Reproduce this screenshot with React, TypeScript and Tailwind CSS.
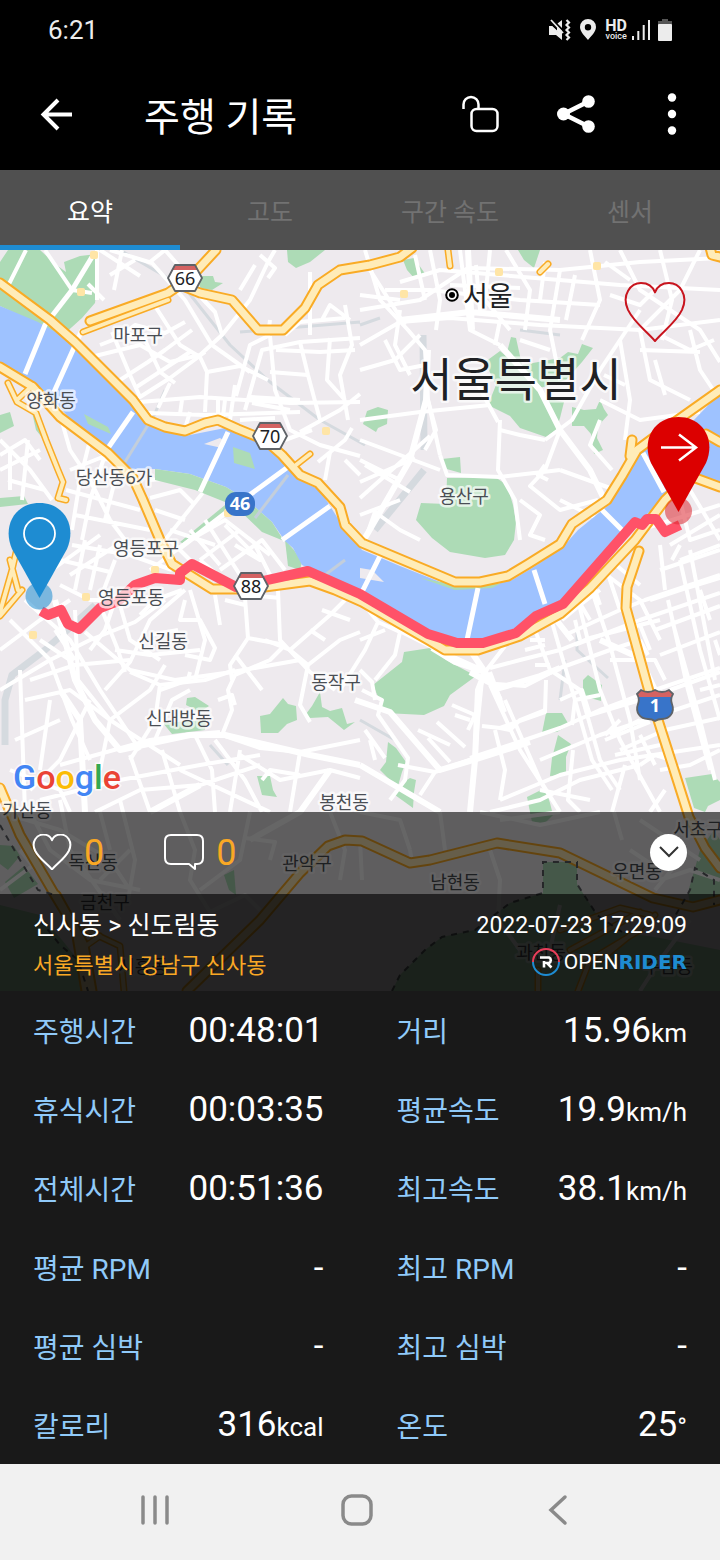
import { useState } from "react";

const tabs = ["요약", "고도", "구간 속도", "센서"];

const stats = [
  { label: "주행시간", value: "00:48:01", unit: "" },
  { label: "거리", value: "15.96", unit: "km" },
  { label: "휴식시간", value: "00:03:35", unit: "" },
  { label: "평균속도", value: "19.9", unit: "km/h" },
  { label: "전체시간", value: "00:51:36", unit: "" },
  { label: "최고속도", value: "38.1", unit: "km/h" },
  { label: "평균 RPM", value: "-", unit: "" },
  { label: "최고 RPM", value: "-", unit: "" },
  { label: "평균 심박", value: "-", unit: "" },
  { label: "최고 심박", value: "-", unit: "" },
  { label: "칼로리", value: "316", unit: "kcal" },
  { label: "온도", value: "25", unit: "°" },
];

const places = [
  { name: "마포구", x: 138, y: 335 },
  { name: "양화동", x: 51, y: 400 },
  { name: "당산동6가", x: 114, y: 477 },
  { name: "영등포구", x: 146, y: 548 },
  { name: "영등포동", x: 131, y: 597 },
  { name: "신길동", x: 163, y: 641 },
  { name: "신대방동", x: 179, y: 718 },
  { name: "동작구", x: 336, y: 682 },
  { name: "봉천동", x: 344, y: 802 },
  { name: "가산동", x: 27, y: 810 },
  { name: "용산구", x: 464, y: 496 },
  { name: "독산동", x: 93, y: 862 },
  { name: "금천구", x: 105, y: 902 },
  { name: "관악구", x: 307, y: 863 },
  { name: "남현동", x: 455, y: 882 },
  { name: "우면동", x: 637, y: 871 },
  { name: "서초구", x: 698, y: 829 },
  { name: "과천동", x: 541, y: 952 },
  { name: "시흥동", x: 143, y: 966 },
  { name: "주암동", x: 668, y: 966 },
];

const parks = [
  "M0 282V262L8 250H40L55 264L66 272L64 262L80 256L97 254V286L95 303L82 318L62 336L40 325L0 306Z",
  "M287 250H325L310 262L296 268L288 262Z",
  "M198 276L213 276L215 282L223 283L212 290L200 288Z",
  "M0 415L10 412L14 426L0 433ZM0 498L24 496L28 504L0 507ZM32 412L40 416L44 440L36 430Z",
  "M225 505L180 542L186 545L229 511Z",
  "M403 260L414 258L426 275L415 279L407 270ZM518 250H540L534 268L524 260Z",
  "M511 337L516 338L522 365L560 358L568 352L578 354L582 344L593 348L582 362L566 380L540 388L545 398L564 402L560 418L556 430L546 437L520 428L510 416L488 405L496 385L485 362L500 351L506 356Z",
  "M572 407L584 410L596 409L600 400L604 409L608 415L598 426L597 438L603 450L594 454L591 434L584 426L572 426Z",
  "M363 424L367 411L378 407L388 410L387 424L378 428L376 432Z",
  "M442 459L460 457L461 473L443 468Z",
  "M447 478L495 477L507 485L513 505L516 522L514 540L505 555L485 558L450 552L432 538L416 520L421 503L446 504Z",
  "M705 424L716 420L716 436L706 434Z",
  "M285 540L294 550L302 562L300 570L288 566Z",
  "M373 685L402 662L404 652L430 648L446 660L476 676L450 695L444 706L424 715L385 713Z",
  "M187 698L195 697L209 706L200 712L186 705ZM163 723L172 734L205 730L206 720Z",
  "M260 716L270 714L283 698L288 704L296 706L297 720L287 724L278 733L261 733Z",
  "M306 714L312 706L320 692L322 707L330 711L342 708L347 724L355 722L344 730L328 717L310 718Z",
  "M257 776L270 776L273 790L277 797L262 795Z",
  "M388 742L396 748L406 762L402 772L398 786L410 778L416 780L414 792L413 808L395 795L396 786L380 770L386 762Z",
  "M546 713L562 713L569 725L557 732L542 733Z",
  "M558 735L571 744L566 757L566 775L550 776L552 758Z",
  "M527 797L545 788L550 803L553 815L545 823L532 822Z",
  "M583 680L588 675L602 685L601 701L583 696Z",
  "M685 778L712 774L720 782V800L708 806L705 812L694 808Z",
  "M0 845L14 846L20 856L8 870L0 864ZM5 882L24 866L38 884L14 898ZM0 905L40 915L62 940L82 965L88 991H0Z",
  "M224 875L234 870L236 895L229 890Z",
  "M543 862H577V884L597 915L622 932L660 938L720 950V991H392L400 975L425 950L442 937L475 930L510 903L543 893Z",
  "M688 892L695 868L700 850L714 830L720 840V905L690 905Z",
];

const roads = [
  // Mapo
  "M26 250L8 286M45 250L72 290L92 293M100 250L140 276M97 250V300M88 284L104 300",
  "M110 250L152 263L185 300L212 345L250 372M122 250L114 290M135 260L110 275M150 262L165 250M165 250L200 290",
  "M95 356L140 345L170 362L200 355L222 335L250 300L268 262L275 250M260 255L275 268L268 278M255 265L240 290",
  "M112 332L130 375L140 397L170 378L205 352M118 330L145 340L160 372L175 383M155 306L180 345L200 357L207 372L240 366L268 380",
  "M100 345L118 338L135 325L165 333L185 322M120 380L148 362L165 350L192 330M135 388L190 352",
  "M207 372L205 412M140 402L200 397L290 403L360 402M148 413L205 415L300 412M170 383L158 408M182 400L180 414M235 385L230 420M190 412L186 425",
  "M222 335L215 312L196 292M236 396L250 345L268 336L270 320M245 410L262 350L300 342L360 338",
  "M270 336L275 390L290 430L320 445L360 456M300 342L308 375L320 420M330 338L327 380L345 400M310 335V272M345 305L352 345L340 375L348 420",
  "M300 432L340 410L360 394M318 462L345 440L352 428M276 350L320 352L355 350M270 372L308 375M322 320L330 305L350 320M285 335L300 322L345 318",
  "M240 420L275 418M250 397L300 400M252 403L290 410M218 398V425M225 400L222 425M285 440L312 430M345 460L360 475M330 452L325 480",
  // Jongno and Yongsan
  "M360 310L420 300L468 268L560 270L640 262L720 258M360 345L400 322L450 318L540 325L640 330L720 320",
  "M365 250L380 300L408 330L425 350L428 400L440 455M400 282L440 270L500 275L620 285L720 290M385 290L430 290L520 300L600 305",
  "M460 250L470 330L500 345M490 250L485 300L510 330M506 250L530 290L525 330M430 250L440 300L436 330M415 255L425 300M476 265L480 310",
  "M560 270L550 330L560 380M590 250L600 300L582 340M620 250L640 290L700 330L720 362M575 275L566 320M545 262L540 300",
  "M640 310L600 370L572 420L545 440M700 250L680 290L640 330L650 380L690 400M660 250L672 300L662 340M610 295L640 305L655 290M605 262L630 280",
  "M360 420L420 412L490 405M428 400L436 430L425 450M478 385L498 422M500 420L498 470L515 500L520 540",
  "M360 440L440 470M360 482L415 458M360 498L430 436M360 460L400 480M365 465L410 492M385 340L400 370L425 365M360 370L395 360L420 335",
  "M440 455L447 475L500 477L560 470M560 430L545 470L530 486L560 510L598 500M548 480L538 475L545 465M500 430L520 435L545 440",
  "M600 400L640 420L700 412M620 340L630 400L625 440M560 470L610 488M690 330L700 370L720 400M640 350L700 352M655 360L665 395M604 375L625 385M660 335L690 350L714 340",
  "M360 515L400 500M365 540L375 512L400 530L420 540M520 500L540 515L530 535L545 540M560 500L600 520M600 420L590 445L612 470",
  "M400 310L395 345L410 375M360 295L400 300M370 270L405 325M450 285L520 288M520 340L550 350M500 320L495 345",
  // left bank
  "M0 440L30 470L52 500M0 455L25 440L40 460M8 480L45 490M28 440L22 500M10 450V490M0 470L40 450",
  "M60 415L70 450L90 480L110 520L125 540M75 430L120 470M70 470L100 458L120 462M66 490L140 510M75 515L150 530M90 440L80 480L72 530M105 455L90 500L82 540M120 460L105 520",
  "M150 480L175 478L215 490M150 498L180 490L195 505M155 510L185 520M165 540L205 490M170 530L215 545",
  "M150 570L190 540L225 520L270 555M170 540L200 570M190 530L220 565M205 520L240 575M225 525L260 560L235 545M200 560L240 530M220 570L262 540L285 570M255 545L270 575",
  "M72 545L130 555L172 570M60 560L110 572M70 575L125 540M85 540L75 590M100 545L90 590M115 560L100 600M60 585L90 600L115 600M45 575L100 535",
  "M25 600L70 640L100 690L140 750M10 620L50 660L72 720L90 760M0 650L40 620L70 600M0 690L50 660L90 640L135 622L165 600M55 630L75 660M30 680L75 665L130 660",
  "M75 610L78 680L110 720L180 765M85 632L130 670L175 680L232 672L300 660M90 650L105 630L115 600M105 690L130 662L150 620L185 590",
  "M20 670L25 812M25 700L70 690L110 720L150 690L165 665M40 640L70 660M50 700L40 770M60 720L15 740M90 700L60 760L30 790M110 720L100 770",
  "M130 672L160 685L205 680L235 670M160 685L155 720L130 760M115 650L150 655L200 650M120 605L130 640L160 660M100 605L118 650L125 672M140 615L155 600L182 590M150 635L178 630M185 600L180 620L200 620L215 648L210 660L185 655",
  "M190 590L205 640L195 680M215 595L220 625M200 560L245 598L248 638L285 645M225 600L245 605M248 638L230 665L232 680M278 590L280 640L310 672L335 690M250 595L280 598",
  "M285 645L270 660L235 675L228 690L232 710L222 735M222 735L260 748L300 752L360 740M265 640L290 650L308 665L300 705L310 722M290 650L330 615L345 600M322 610L350 620M308 665L340 640L360 632M310 630L325 640",
  "M60 765L150 740L185 735L220 732M40 800L120 780L200 765L260 755M95 812L140 790L200 785L260 765M162 750L180 812M130 755L150 812M195 735L212 770L215 812M215 740L245 780L262 812M240 750L230 812M300 752L290 812M180 770L270 812M10 770L60 790L70 812",
  "M155 740L172 700L190 690M160 690L188 680L190 672M235 655L262 690M218 700L232 695L235 705M262 780L270 770L300 775M240 755L280 780L330 770L360 778",
  // Dongjak
  "M360 600L378 622L365 650L340 690M378 622L400 632L395 655L375 680M360 640L385 630M362 690L382 700L378 715L408 758L405 780L390 800M360 670L372 682L375 700",
  "M398 765L435 772L475 758L478 720L482 680M435 772L420 795M428 738L450 762M418 730L450 745M437 722L465 747M452 705L475 715L468 730M455 715L470 720M495 730L505 770L500 800M470 758L510 745L560 728L600 710L640 695L720 668",
  "M365 730L385 758M370 740L375 760M482 726L500 728L545 712L546 680M500 728L510 730L520 720L545 710",
  "M485 672L505 646M490 668L520 660L560 650L590 638L640 625L660 620M496 684L525 686L560 668L610 650L640 640M505 700L540 780L560 812M490 685L520 750L560 812M490 672L505 712",
  "M535 630L550 670L580 690L600 760L620 790M540 625L560 617L580 600M562 620L580 605L600 590M530 640L545 640M525 650L545 645M535 665L550 665M550 615L560 650L575 700L592 760L612 790",
  // Gangnam grid
  "M578 600L600 690L620 740L660 812M590 585L610 645L630 720L640 780M600 570L640 600L660 640M605 565L620 610M565 635L620 610L645 600L720 575M575 645L640 620L720 593M640 625L650 650",
  "M660 570L720 550M650 600L680 590L720 578M655 630L720 606M660 655L720 632M670 690L720 672M610 660L655 660L665 680M660 545L665 590M680 545L672 560M690 550L715 680M680 560L700 650L720 720M672 620L700 720L715 780M668 600L688 690L710 770",
  "M540 760L600 735L660 715L720 695M500 800L560 775L620 760L720 745M490 812L540 800L580 780L640 765M600 710L640 700M620 750L665 730L720 718M605 740L650 722M625 765L612 812M640 765L655 755L672 760M615 755L660 745M640 735L655 765",
  "M560 700L582 690L590 715L640 700M572 725L575 700L600 695M610 735L640 720M620 720L605 735M573 750L568 800L580 812M540 790L590 800M580 640L575 620M700 590L710 620M715 640L720 655M700 690L720 685",
  "M660 770L690 765L720 750M665 790L650 812M640 640L648 655M610 560L640 585M590 575L600 605M575 595L590 620M620 550L640 530L720 505M680 500L690 540L720 530M690 490L720 540M680 560L720 545M670 545L720 515",
  // south hills, under the panels
  "M0 812L60 830L110 860L130 890M30 812L50 850L90 880L140 890M60 800L70 850L120 920M120 800L135 860L128 900M100 812L110 850M40 860L0 890M20 850L60 900M130 850L100 880",
  "M180 812L195 850L190 880L210 912L245 895L260 910M250 812L240 860L200 890M245 838L275 842L270 860M330 812L345 850L340 880M362 880L360 840M480 812L540 825L600 812M360 812L400 820L410 850M440 812L445 850M500 820L560 812",
  "M410 850L412 862M490 850L500 880L498 920L520 950M660 880L690 870L720 880M655 890L680 860M630 850L660 870M614 812L622 840M640 820L700 860M560 905L550 950L600 960M690 920L660 960L640 991",
];

const bridges = [
  "M92 257L72 290L45 325L25 374M82 330L54 392M133 412L108 448",
  "M228 432L200 492M292 464L240 502L180 548M330 506L282 540M380 556L362 592M478 588L467 640M534 570L545 604M643 453L664 492M602 510L624 532",
];

const mainRoads = [
  "M500 345L540 390L560 430L590 470L618 528M428 350L426 400L410 460L365 538",
  "M55 600L75 680L95 720L120 750L190 735L225 735L310 755L360 765M440 652L485 672L500 700M470 650L485 672L478 690L475 760L470 812",
  "M485 672L455 662L432 648M362 595L400 630L440 650M470 672L500 688L540 676L560 668M572 640L550 612M600 640L640 658L655 690",
  "M360 765L440 812M330 770L300 812L250 840M60 690L80 720L85 812M200 785L150 812",
  "M355 700L390 712L440 770L480 758L530 742M400 320L470 312L560 320M468 250L472 330",
];

const highways = [
  "M0 283L50 320L75 342L110 377L133 400L148 420L165 427L185 431L205 423L218 420L238 429L265 440L282 455L300 475L318 483L340 507L345 525L362 543L455 582L480 582L508 576L528 564L560 544L572 524L607 500L622 476L637 450L672 424L720 390",
  "M90 321L168 293L190 278L216 250",
  "M185 287L200 293L232 300L258 330L283 330L305 308L318 285L340 270L370 265L400 257L412 248",
  "M0 367L33 387L60 417L108 453L133 478L143 500L160 540L172 564L212 589L250 589L310 581L335 590L362 602L430 641L445 650L478 650L520 636L560 614L590 588L635 540L665 500L690 476L720 487",
  "M639 551L627 587L626 608L650 695L675 773L689 817L705 848L720 868",
  "M187 991L260 920L300 873L328 846L345 840L362 841L410 863L430 860L497 843L560 853L653 898L693 907L720 900",
  "M0 788L20 835L52 890L76 930L86 991M56 895L84 945L92 991M632 440L630 456M706 434L720 442M708 240L712 255L724 258",
];

const minorHighways = [
  "M83 332L120 318L168 300M8 383L17 402L36 413L46 440L58 470L63 482L58 498L66 500M33 385L17 400M20 535L12 570L0 612M22 590L0 616M10 560L18 590",
  "M296 465L310 454M448 250L450 266M540 272L548 264M86 930L120 946L124 991M100 936L80 950M560 930L620 908L650 915M600 960L655 915M570 950L640 912M578 991L590 960L640 930M538 991V970",
];

const junctions = [
  [94, 255], [81, 292], [326, 431], [404, 294], [499, 272], [597, 266], [228, 513], [86, 597], [155, 570], [33, 635],
];

const shieldPath =
  "M641 690Q648 694 655 690Q662 694 669 690L673 694Q670 699 672 704C675 712 670 719 662 719Q658 719 655 721Q652 719 648 719C640 719 635 712 638 704Q640 699 637 694Z";

const heartPath =
  "M31 57C21 46 10 39 4 27C-3 12 7 1 17 1C24 1 29 5 31 10C33 5 38 1 45 1C55 1 65 12 58 27C52 39 41 46 31 57Z";

function Heart({ className }: { className: string }) {
  return (
    <svg viewBox="-1 0 64 58" preserveAspectRatio="none" fill="none" stroke="currentColor" className={className} aria-hidden="true">
      <path d={heartPath} strokeWidth="2" strokeLinejoin="round" vectorEffect="non-scaling-stroke" />
    </svg>
  );
}

function RoadShield({ x, y, n }: { x: number; y: number; n: string }) {
  return (
    <g transform={`translate(${x} ${y})`}>
      <path d="M-17 0L-10 -13H10L17 0L10 13H-10Z" fill="#fff" />
      <path d="M-13 -8L-10 -13H10L13 -8Z" fill="#d46262" />
      <path d="M-17 0L-10 -13H10L17 0L10 13H-10Z" fill="none" stroke="#5f6368" strokeWidth="1.8" strokeLinejoin="round" />
      <text y="7" textAnchor="middle" fontSize="18" fill="#202124">{n}</text>
    </g>
  );
}

function RouteMap() {
  return (
    <svg
      viewBox="0 250 720 741"
      role="img"
      aria-label="주행 경로 지도"
      className="block h-auto w-full bg-[#eeeaee] font-['Noto_Sans','Noto_Sans_CJK_KR',sans-serif]"
    >
      <rect y="250" width="720" height="741" fill="#eeeaee" />
      <g fill="#addbb6">{parks.map((d) => <path key={d} d={d} />)}</g>
      <g fill="none" stroke="#d5dadf" strokeLinejoin="round">
        <path strokeWidth="3" d="M120 250L185 288L230 345L270 382L320 420L365 445M165 390L150 425M210 745L228 765M360 325L380 318M520 330L560 335M360 720L395 740M577 625V650L608 678M565 660L560 700M240 332L360 322" />
        <path strokeWidth="7" d="M95 605L45 650L12 675L5 700V745M423 335L424 450M424 470L375 530" />
      </g>
      <g fill="none" stroke="#fff" strokeLinejoin="round">
        <g strokeWidth="4">{roads.map((d) => <path key={d} d={d} />)}</g>
        <g strokeWidth="6">{mainRoads.map((d) => <path key={d} d={d} />)}</g>
      </g>
      {/* Han river and its islands */}
      <path
        fill="#9ec2ff"
        d="M0 306L38 322L66 338L110 380L135 410L150 426L185 436L225 428L262 444L285 462L300 480L320 490L342 525L362 550L400 566L450 586L482 588L512 580L532 568L562 548L578 530L610 504L626 474L642 450L665 436L693 421L720 393V482L690 474L664 498L637 524L565 598L536 612L516 628L480 640L458 640L430 630L362 592L308 568L302 565L293 548L285 541L272 522L247 500L226 487L190 474L155 469L133 470L108 450L75 425L58 405L33 385L0 368Z"
      />
      <path
        fill="#addbb6"
        d="M84 414L108 427L111 434L88 424ZM233 447L250 453L255 469L234 463ZM155 469L190 474L226 487L247 500L272 522L284 541L262 532L235 506L195 490L155 480ZM420 578L455 590L492 588L500 584L440 582Z"
      />
      <path d="M204 444L220 438L226 442L222 448ZM360 568L372 570L384 582L360 578Z" fill="#eeeaee" />
      <path d="M148 425L125 462M288 475L255 518M345 560L325 575" fill="none" stroke="#c3cedb" strokeWidth="3" />
      <g fill="none" stroke="#fff" strokeWidth="5">{bridges.map((d) => <path key={d} d={d} />)}</g>

      <g fill="#ffe5a6">{junctions.map(([x, y]) => <rect key={`${x}-${y}`} x={x - 4} y={y - 4} width="8" height="8" rx="2" />)}</g>
      <g fill="none" strokeLinejoin="round" strokeLinecap="round">
        <g stroke="#f9ab25" strokeWidth="7">{minorHighways.map((d) => <path key={d} d={d} />)}</g>
        <g stroke="#f9ab25" strokeWidth="11">{highways.map((d) => <path key={d} d={d} />)}</g>
        <g stroke="#ffecb8" strokeWidth="4">{minorHighways.map((d) => <path key={d} d={d} />)}</g>
        <g stroke="#ffecb8" strokeWidth="7">{highways.map((d) => <path key={d} d={d} />)}</g>
      </g>
      <path
        d="M392 991L400 975L425 950L442 937L475 930L510 903L543 893V862H577V884L597 915L622 932M670 925L690 890L695 868L714 880V905M0 825L20 860L38 890L55 895M40 920L60 945L78 960L88 991"
        fill="none" stroke="#5f6368" strokeWidth="2" strokeDasharray="6 6"
      />
      <path
        d="M41 611L48 615L61 610L68 624L79 629L100 608L118 601L135 585L155 578L180 580V573L192 564L236 587L308 571L360 594L428 634L457 643L483 643L516 633L536 616L563 604L635 522L642 525L647 519L656 519L665 532L680 525"
        fill="none" stroke="#ff5268" strokeWidth="10" strokeLinejoin="round"
      />

      <g fontSize="18" fill="#4a4e54" stroke="#fff" strokeWidth="5" strokeOpacity="0.7" strokeLinejoin="round" paintOrder="stroke" textAnchor="middle">
        {places.map((p) => <text key={p.name} x={p.x} y={p.y + 7}>{p.name}</text>)}
      </g>
      <g fill="#202124" stroke="#fff" strokeWidth="5" strokeOpacity="0.7" strokeLinejoin="round" paintOrder="stroke">
        <text x="463" y="306" fontSize="27">서울</text>
        <text x="516" y="396" fontSize="46" textAnchor="middle">서울특별시</text>
      </g>
      <circle cx="452" cy="295" r="5.8" fill="#fff" stroke="#000" strokeWidth="2" />
      <circle cx="452" cy="295" r="3" />

      <RoadShield x={185} y={278} n="66" />
      <RoadShield x={270} y={436} n="70" />
      <RoadShield x={251} y={586} n="88" />
      <g fill="#fff" fontSize="18" fontWeight="700" textAnchor="middle">
        <rect x="225" y="492" width="30" height="24" rx="11" fill="#3874c9" />
        <text x="240" y="510">46</text>
        <path d={shieldPath} fill="#3874c9" />
        <path d="M641 690Q648 694 655 690Q662 694 669 690L673 694L671 697H639L637 694Z" fill="#d46262" />
        <path d={shieldPath} fill="none" stroke="#5f6368" strokeWidth="1.8" />
        <text x="655" y="712">1</text>
      </g>

      <circle cx="39" cy="596" r="13.5" fill="#1e8cd2" opacity="0.55" />
      <path d="M39.5 598L12 549C2 526 15 503 39.5 503C64 503 77 526 67 549Z" fill="#1e8cd2" />
      <circle cx="39.5" cy="533.5" r="15.5" fill="none" stroke="#fff" strokeWidth="1.8" />
      <circle cx="678.5" cy="511" r="13.5" fill="#dc2832" opacity="0.55" />
      <path d="M678.5 512L651 463C641 440 654 417 678.5 417C703 417 716 440 706 463Z" fill="#dc0000" />
      <path d="M661 447.5H696M679 434.5L696 447.5L679 460.5" fill="none" stroke="#fff" strokeWidth="2.5" />

      <text x="13" y="789" fontSize="34" fontWeight="500" className="font-[Roboto,sans-serif]" stroke="#fff" strokeWidth="3" strokeOpacity="0.7" paintOrder="stroke">
        <tspan fill="#4285f4">G</tspan>
        <tspan fill="#ea4335">o</tspan>
        <tspan fill="#fbbc05">o</tspan>
        <tspan fill="#4285f4">g</tspan>
        <tspan fill="#34a853">l</tspan>
        <tspan fill="#ea4335">e</tspan>
      </text>
    </svg>
  );
}

function StatusBar() {
  return (
    <div className="flex h-15 items-center justify-between px-12 text-[#ececec]">
      <span className="text-[26px]">6:21</span>
      <div className="flex items-center pb-px">
        <svg width="22" height="22" viewBox="0 0 22 22" fill="currentColor" aria-hidden="true">
          <path d="M0 7H3L13 16V21L7 16H0ZM13 1V9L8.5 4.5Z" />
          <path d="M3 7L13 17V12L8 7ZM0 7H8V12H0Z" />
          <path d="M2 1L14 14" stroke="currentColor" strokeWidth="1.8" />
          <path d="M17.5 1L20 3.5L17.5 6L20 8.5L17.5 11L20 13.5L17.5 16L20 18.5L17.5 21" fill="none" stroke="currentColor" strokeWidth="2.2" />
        </svg>
        <svg width="16" height="21" viewBox="0 0 16 21" className="ml-[9px]" fill="currentColor" aria-hidden="true">
          <path fillRule="evenodd" d="M8 0a8 8 0 0 1 8 8c0 5-5 9-8 13C5 17 0 13 0 8a8 8 0 0 1 8-8Zm0 5a3.2 3.2 0 1 0 0 6.4A3.2 3.2 0 0 0 8 5Z" />
        </svg>
        <span className="ml-[9px] flex flex-col items-center">
          <span className="text-[16px] leading-[12px] font-bold">HD</span>
          <span className="text-[9px] leading-[8px] font-medium">voice</span>
        </span>
        <svg width="18" height="20" viewBox="0 0 18 20" className="ml-[5px]" stroke="currentColor" strokeWidth="2" aria-hidden="true">
          <path d="M1 16V20M6.3 11V20M11.7 5V20M17 0V20" />
        </svg>
        <svg width="14" height="22" viewBox="0 0 14 22" className="ml-2" fill="currentColor" aria-hidden="true">
          <path d="M4 0H10V2H14V6H0V2H4Z" fill="#555" />
          <rect y="5" width="14" height="17" rx="1" />
        </svg>
      </div>
    </div>
  );
}

export default function App() {
  const [tab, setTab] = useState(0);

  return (
    <main className="flex min-h-screen w-full flex-col bg-[#191919] font-[Roboto,'Noto_Sans_CJK_KR',sans-serif] text-white">
      <header className="bg-black">
        <StatusBar />
        <div className="flex h-[110px] items-center pr-7 pb-0.5 pl-10">
          <button type="button" aria-label="뒤로">
            <svg width="33" height="33" viewBox="0 0 33 33" fill="none" stroke="currentColor" strokeWidth="4" aria-hidden="true">
              <path d="M32 16.5H4M18 2L3.5 16.5L18 31" />
            </svg>
          </button>
          <h1 className="ml-[71px] flex-1 pt-2 text-[39px] leading-none">주행 기록</h1>
          <button type="button" aria-label="잠금 해제">
            <svg width="38" height="38" viewBox="0 0 38 38" fill="none" stroke="currentColor" strokeWidth="2.5" aria-hidden="true">
              <path d="M1.5 14V9.5a7.5 7.5 0 0 1 15 0V14" />
              <rect x="9.5" y="14" width="26" height="22" rx="5" />
            </svg>
          </button>
          <button type="button" aria-label="공유" className="ml-14">
            <svg width="40" height="40" viewBox="0 0 40 40" fill="currentColor" aria-hidden="true">
              <path d="M32.5 7.5L7.5 20L32.5 32.5" fill="none" stroke="currentColor" strokeWidth="4.5" />
              <circle cx="32.5" cy="7.5" r="6.3" />
              <circle cx="7.5" cy="20" r="6.5" />
              <circle cx="32.5" cy="32.5" r="6.3" />
            </svg>
          </button>
          <button type="button" aria-label="더보기" className="ml-14">
            <svg width="40" height="44" viewBox="0 0 40 44" fill="currentColor" aria-hidden="true">
              <circle cx="20" cy="5.5" r="4.2" />
              <circle cx="20" cy="22" r="4.2" />
              <circle cx="20" cy="38.5" r="4.2" />
            </svg>
          </button>
        </div>
      </header>

      <div role="tablist" className="grid h-20 grid-cols-4 bg-[#505050] text-[25px]">
        {tabs.map((name, i) => (
          <button
            key={name}
            type="button"
            role="tab"
            aria-selected={tab === i}
            onClick={() => setTab(i)}
            className={tab === i ? "border-b-5 border-[#1e8cd2] pt-2.5 text-white" : "border-b-5 border-transparent pt-2.5 text-[#727272]"}
          >
            {name}
          </button>
        ))}
      </div>

      <section className="relative">
        <RouteMap />
        <button type="button" aria-label="즐겨찾기" className="absolute top-8 right-[33px] text-[#c8141e]">
          <Heart className="h-[60px] w-16" />
        </button>
        <div className="absolute inset-x-0 bottom-0">
          <div className="flex h-[82px] items-center bg-black/60 pr-[33px] pb-0.5 pl-8 text-[36px] leading-none text-[#f9a825]">
            <button type="button" aria-label="좋아요" className="flex items-center gap-3">
              <Heart className="h-9 w-10 text-white" />
              <span className="pt-0.5">0</span>
            </button>
            <button type="button" aria-label="댓글" className="ml-15 flex items-center gap-3">
              <svg width="40" height="36" viewBox="0 0 40 36" fill="none" stroke="#fff" strokeWidth="2" strokeLinejoin="round" aria-hidden="true">
                <path d="M7 1H33Q39 1 39 7V24Q39 30 33 30H31V35L25 30H7Q1 30 1 24V7Q1 1 7 1Z" />
              </svg>
              <span className="pt-0.5">0</span>
            </button>
            <button type="button" aria-label="접기" className="ml-auto grid size-[37px] place-items-center rounded-full bg-white">
              <svg width="20" height="12" viewBox="0 0 20 12" fill="none" stroke="#333" strokeWidth="2" aria-hidden="true">
                <path d="M1 1L10 10L19 1" />
              </svg>
            </button>
          </div>
          <div className="flex h-[97px] justify-between bg-black/85 px-[33px] pt-3">
            <div>
              <p className="text-[25px] leading-10">신사동 &gt; 신도림동</p>
              <p className="mt-1 text-[22px] leading-8 text-[#f9a825]">서울특별시 강남구 신사동</p>
            </div>
            <div className="flex flex-col items-end">
              <time className="text-[23px] leading-10">2022-07-23 17:29:09</time>
              <p className="flex items-center text-[21px] leading-8">
                <svg width="28" height="28" viewBox="0 0 28 28" className="mr-1" fill="none" strokeWidth="2" aria-hidden="true">
                  <path d="M1 14a13 13 0 0 1 26 0" stroke="#e83e5a" />
                  <path d="M1 14a13 13 0 0 0 26 0" stroke="#1e8cd2" />
                  <path d="M8 9.5H17a3 3 0 0 1 0 5.500H15L19.500 19.500M12 13V19.500" stroke="#fff" strokeWidth="2.6" />
                </svg>
                <span>OPEN</span>
                <span className="font-['DejaVu_Sans',sans-serif] text-[20px] font-bold text-[#1e8cd2]">RIDER</span>
              </p>
            </div>
          </div>
        </div>
      </section>

      <dl className="grid flex-1 grid-cols-2 gap-x-[73px] px-[33px]">
        {stats.map((s) => (
          <div key={s.label} className="flex items-center justify-between pt-0.5">
            <dt className="pt-1 text-[28px] text-[#90caf9]">{s.label}</dt>
            <dd className="text-[35px]">
              {s.value}
              {s.unit && <span className="text-[26px]">{s.unit}</span>}
            </dd>
          </div>
        ))}
      </dl>

      <nav className="flex h-24 items-center justify-between bg-[#f1f1f1] pr-[145px] pb-1 pl-[138px] text-[#8a8a8a]">
        <button type="button" aria-label="최근 앱">
          <svg width="34" height="32" viewBox="0 0 34 32" stroke="currentColor" strokeWidth="3.5" strokeLinecap="round" aria-hidden="true">
            <path d="M5 3V29M17 3V29M29 3V29" />
          </svg>
        </button>
        <button type="button" aria-label="홈">
          <svg width="34" height="34" viewBox="0 0 34 34" fill="none" stroke="currentColor" strokeWidth="3.5" aria-hidden="true">
            <rect x="3" y="3" width="28" height="28" rx="8.5" />
          </svg>
        </button>
        <button type="button" aria-label="뒤로 가기">
          <svg width="34" height="32" viewBox="0 0 34 32" fill="none" stroke="currentColor" strokeWidth="3.5" strokeLinecap="round" aria-hidden="true">
            <path d="M24 3L10 16L24 29" />
          </svg>
        </button>
      </nav>
    </main>
  );
}
